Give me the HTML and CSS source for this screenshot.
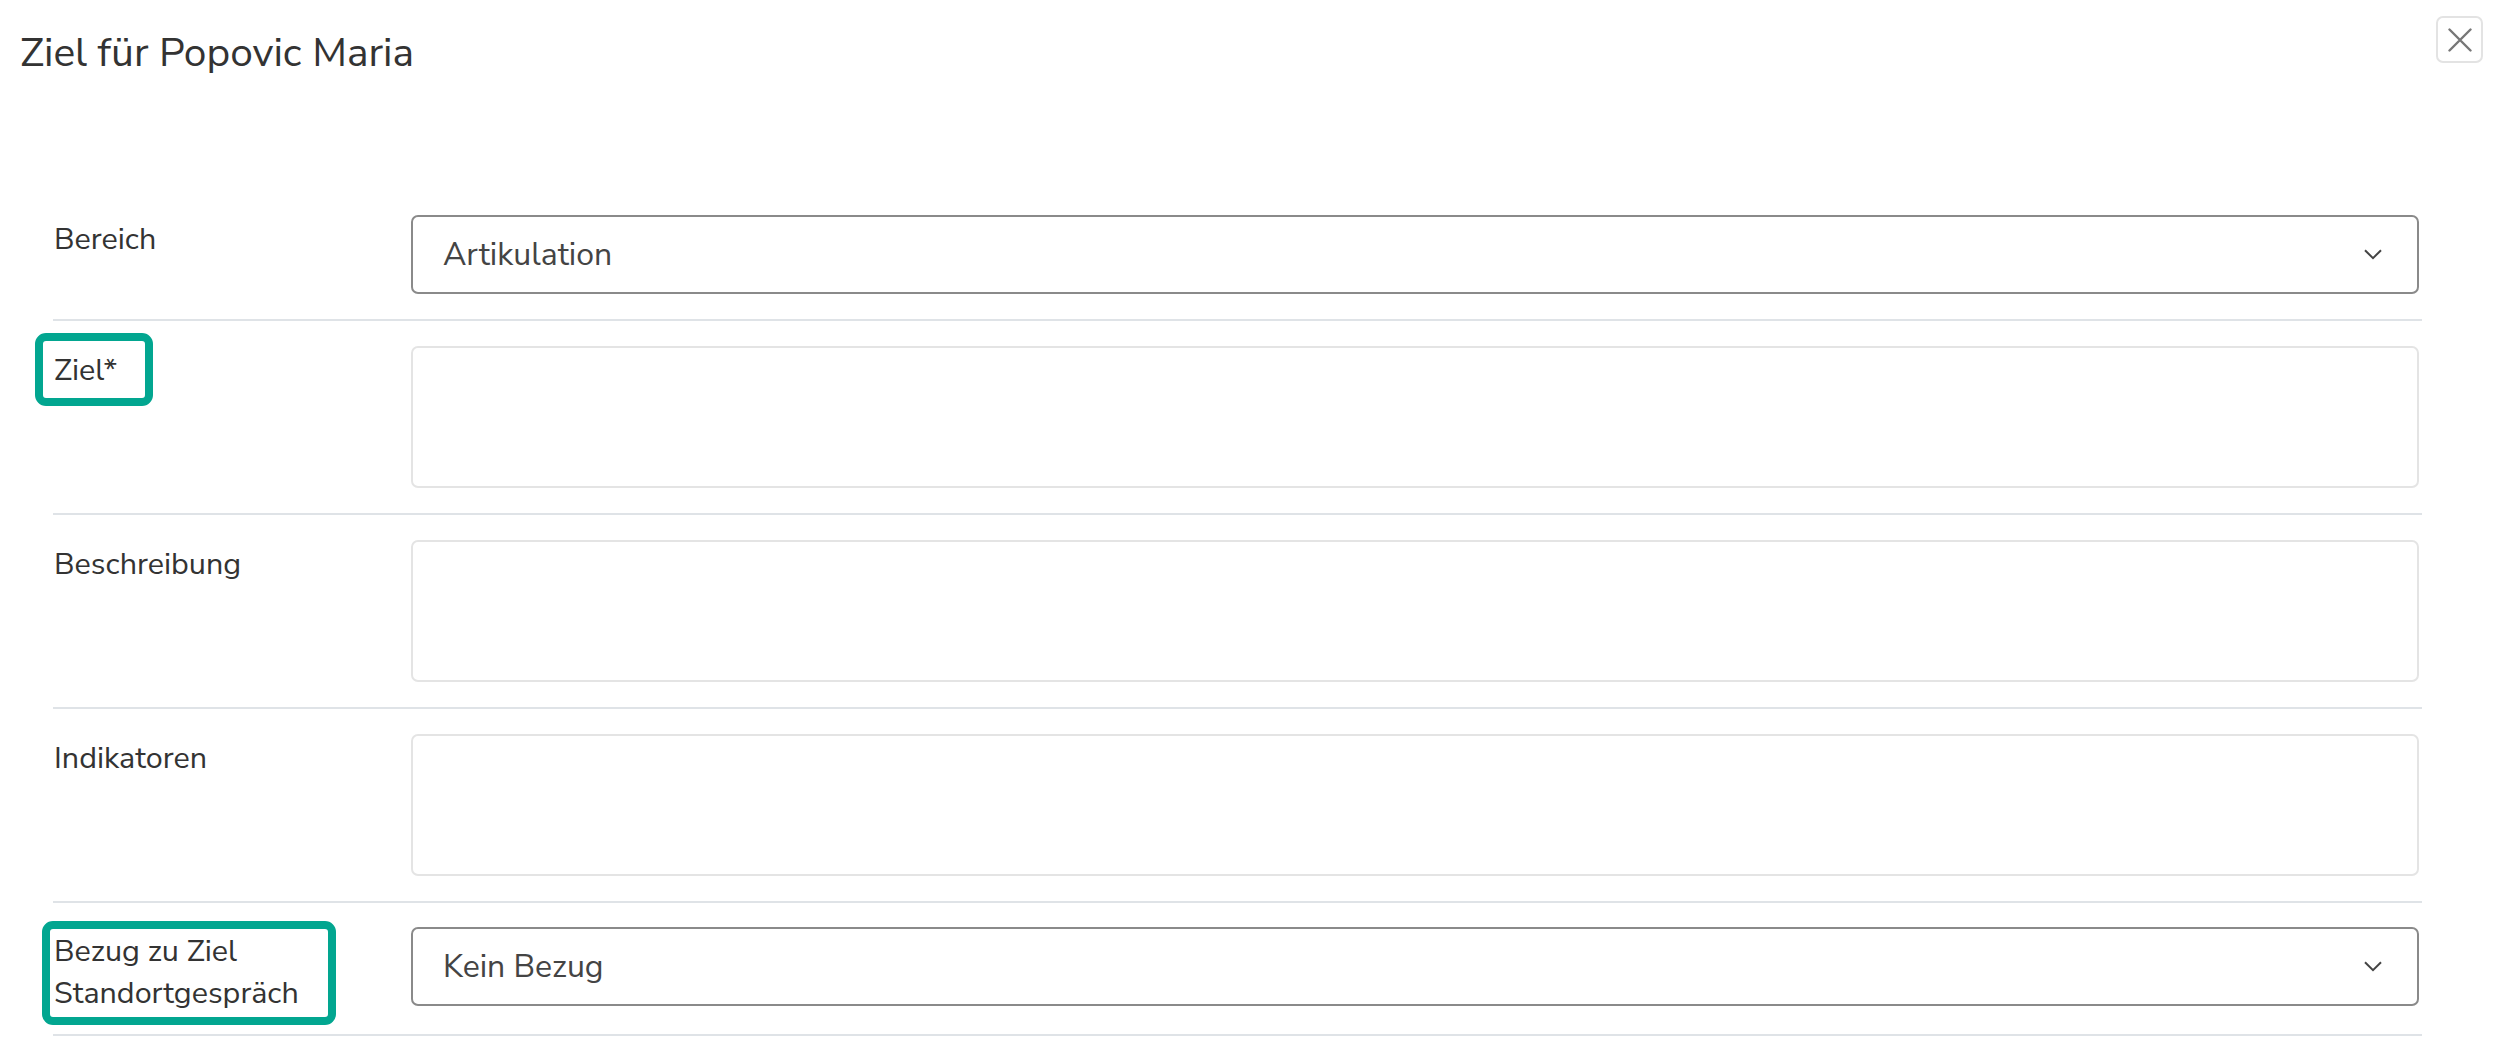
FILE: index.html
```html
<!DOCTYPE html>
<html lang="de">
<head>
<meta charset="utf-8">
<title>Ziel für Popovic Maria</title>
<link rel="stylesheet" href="styles.css">
</head>
<body>
<div class="modal">
  <header class="modal-head">
    <h1 class="title">Ziel für Popovic Maria</h1>
    <button class="close" type="button" aria-label="Schließen">
      <svg width="24" height="24" viewBox="0 0 24 24"><path d="M1.5 1.5 L22.5 22.5 M22.5 1.5 L1.5 22.5" stroke="#777" stroke-width="2.4" fill="none" stroke-linecap="round"/></svg>
    </button>
  </header>
  <form class="form">
    <div class="row">
      <div class="label"><span class="label-text">Bereich</span></div>
      <div class="control">
        <div class="select"><span class="select-value">Artikulation</span>
          <svg class="chev" width="18" height="11" viewBox="0 0 18 11"><path d="M1 1.2 L9 9.2 L17 1.2" stroke="#444" stroke-width="2" fill="none"/></svg>
        </div>
      </div>
    </div>
    <div class="row">
      <div class="label"><span class="label-text hl hl-ziel">Ziel*</span></div>
      <div class="control"><div class="textarea"></div></div>
    </div>
    <div class="row">
      <div class="label"><span class="label-text">Beschreibung</span></div>
      <div class="control"><div class="textarea"></div></div>
    </div>
    <div class="row">
      <div class="label"><span class="label-text">Indikatoren</span></div>
      <div class="control"><div class="textarea"></div></div>
    </div>
    <div class="row row-last">
      <div class="label"><span class="label-text hl hl-bezug">Bezug zu Ziel<br>Standortgespräch</span></div>
      <div class="control">
        <div class="select"><span class="select-value">Kein Bezug</span>
          <svg class="chev" width="18" height="11" viewBox="0 0 18 11"><path d="M1 1.2 L9 9.2 L17 1.2" stroke="#444" stroke-width="2" fill="none"/></svg>
        </div>
      </div>
    </div>
  </form>
</div>
</body>
</html>
```
FILE: styles.css
```css
html, body {
  margin: 0;
  padding: 0;
  background: #fff;
}
body {
  font-family: "Nunito Sans", Lato, "Open Sans", sans-serif;
  color: #333;
  width: 2500px;
  height: 1048px;
  overflow: hidden;
}
.modal {
  display: flex;
  flex-direction: column;
}
.modal-head {
  display: flex;
  justify-content: space-between;
  align-items: flex-start;
  padding: 16px 17px 0 20px;
  height: 175px;
  box-sizing: border-box;
}
.title {
  margin: 12px 0 0;
  font-size: 40.7px;
  line-height: 50px;
  font-weight: 400;
  color: #333;
  letter-spacing: 0;
}
.close {
  width: 47px;
  height: 47px;
  border: 2px solid #e3e3e3;
  border-radius: 7px;
  background: #fff;
  padding: 0;
  display: flex;
  align-items: center;
  justify-content: center;
}
.form {
  margin: 15px 78px 0 53px;
}
.row {
  display: grid;
  grid-template-columns: 358px 1fr;
  padding: 25px 3px 25px 0;
  border-bottom: 2px solid #dfe3e7;
}
.row-last {
  padding-top: 24px;
  padding-bottom: 20px;
}
.label {
  padding-left: 1px;
  padding-top: 3px;
  font-size: 30.5px;
  line-height: 42px;
  color: #333;
}
.label-text {
  display: inline-block;
  position: relative;
}
.hl::after {
  content: "";
  position: absolute;
  border: 8px solid #02a690;
  border-radius: 11px;
  box-sizing: border-box;
}
.hl-ziel::after {
  left: -19px;
  top: -16px;
  width: 118px;
  height: 73px;
}
.hl-bezug::after {
  left: -12px;
  top: -9px;
  width: 294px;
  height: 104px;
}
.select {
  height: 79px;
  box-sizing: border-box;
  border: 2px solid #8a8a8a;
  border-radius: 7px;
  display: flex;
  align-items: center;
  justify-content: space-between;
  padding: 0 35px 0 30px;
}
.select-value {
  font-size: 32px;
  color: #444;
}
.chev {
  display: block;
}
.textarea {
  height: 142px;
  box-sizing: border-box;
  border: 2px solid #e4e4e4;
  border-radius: 7px;
}
```
